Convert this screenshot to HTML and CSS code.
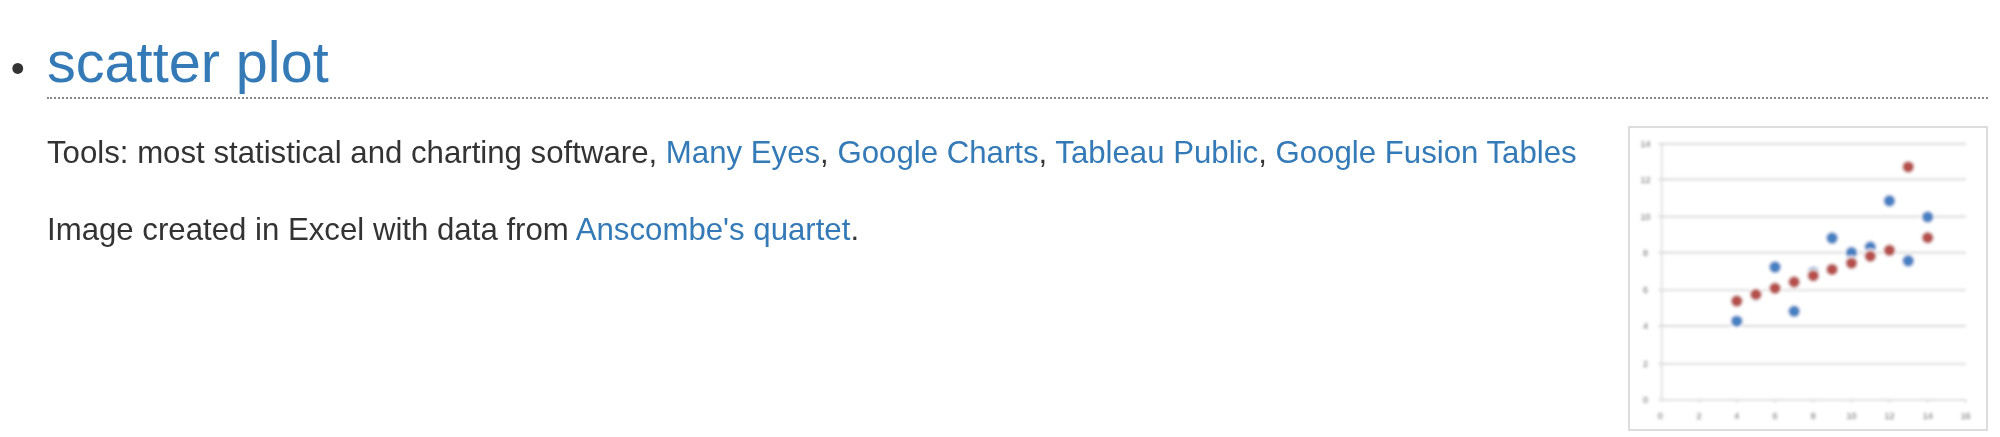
FILE: index.html
```html
<!DOCTYPE html>
<html lang="en">
<head>
<meta charset="utf-8">
<title>scatter plot</title>
<link rel="stylesheet" href="styles.css">
</head>
<body>
<ul class="charts">
  <li class="chart-item">
    <h2 class="chart-title"><a href="#">scatter plot</a></h2>
    <div class="chart-body">
      <div class="chart-text">
        <p>Tools: most statistical and charting software, <a href="#">Many Eyes</a>, <a href="#">Google Charts</a>, <a href="#">Tableau Public</a>, <a href="#">Google Fusion Tables</a></p>
        <p>Image created in Excel with data from <a href="#">Anscombe's quartet</a>.</p>
      </div>
      <svg class="thumb" viewBox="85 52 1078 913" role="img" aria-label="Scatter plot of Anscombe's quartet">
        <defs><filter id="soft" x="-5%" y="-5%" width="110%" height="110%"><feGaussianBlur stdDeviation="4.5"/></filter></defs>
        <g filter="url(#soft)">
          <g class="grid">
            <path d="M170 100H1103M170 208H1103M170 321H1103M170 430H1103M170 544H1103M170 652H1103M170 767H1103"/>
          </g>
          <path class="axis" d="M180 100V877M170 877H1103M295 877v8M408 877v8M524 877v8M640 877v8M756 877v8M871 877v8M987 877v8M1103 877v8"/>
          <g class="ylabels">
            <text x="131" y="110">14</text><text x="131" y="218">12</text><text x="131" y="331">10</text><text x="131" y="440">8</text><text x="131" y="554">6</text><text x="131" y="662">4</text><text x="131" y="777">2</text><text x="131" y="887">0</text>
          </g>
          <g class="xlabels">
            <text x="176" y="934">0</text><text x="293" y="934">2</text><text x="408" y="934">4</text><text x="524" y="934">6</text><text x="640" y="934">8</text><text x="756" y="934">10</text><text x="871" y="934">12</text><text x="987" y="934">14</text><text x="1102" y="934">16</text>
          </g>
          <g class="blue">
            <circle cx="408" cy="638" r="20"/><circle cx="466" cy="562" r="20"/><circle cx="524" cy="474" r="20"/><circle cx="582" cy="608" r="20"/><circle cx="640" cy="490" r="20"/><circle cx="697" cy="386" r="20"/><circle cx="756" cy="430" r="20"/><circle cx="813" cy="413" r="20"/><circle cx="871" cy="273" r="20"/><circle cx="928" cy="455" r="20"/><circle cx="987" cy="322" r="20"/>
          </g>
          <g class="red">
            <circle cx="408" cy="577" r="20"/><circle cx="466" cy="557" r="20"/><circle cx="524" cy="538" r="20"/><circle cx="582" cy="519" r="20"/><circle cx="640" cy="500" r="20"/><circle cx="697" cy="481" r="20"/><circle cx="756" cy="462" r="20"/><circle cx="813" cy="441" r="20"/><circle cx="871" cy="423" r="20"/><circle cx="928" cy="170" r="20"/><circle cx="987" cy="385" r="20"/>
          </g>
        </g>
      </svg>
    </div>
  </li>
</ul>
</body>
</html>
```
FILE: styles.css
```css
html, body {
  margin: 0;
  background: #fff;
}

body {
  font-family: "Liberation Sans", Arial, sans-serif;
  color: #333;
  height: 437px;
  overflow: hidden;
}

.charts {
  margin: 0;
  padding: 0 12px 0 47px;
  filter: blur(0.7px);
}

.chart-item {
  font-size: 30px;
}

.chart-item::marker {
  content: "\2022\00a0\00a0";
  font-size: 40px;
}

a {
  color: #337ab7;
  text-decoration: none;
}

.chart-title {
  margin: 0;
  padding-top: 29px;
  height: 68px;
  font-size: 57.6px;
  line-height: 66px;
  font-weight: 400;
  border-bottom: 2px dotted #888;
}

.chart-body {
  display: flex;
  justify-content: space-between;
  align-items: flex-start;
  padding-top: 27px;
}

.chart-text {
  font-size: 31.2px;
  line-height: 44px;
  padding-top: 5px;
}

.chart-text p {
  margin: 0 0 33px;
}

.thumb {
  display: block;
  width: 360px;
  height: 305px;
  flex: none;
  background: #fff;
  border: 2px solid #ddd;
  box-sizing: border-box;
}

.grid path {
  stroke: #d4d4d4;
  stroke-width: 5;
  fill: none;
}

.axis {
  stroke: #d4d4d4;
  stroke-width: 4;
  fill: none;
}

.thumb text {
  font-family: "Liberation Sans", Arial, sans-serif;
  font-size: 27px;
  fill: #666;
  text-anchor: middle;
}

.blue circle {
  fill: #4680c2;
  stroke: #fff;
  stroke-width: 5;
}

.red circle {
  fill: #b5504c;
  stroke: #fff;
  stroke-width: 5;
}
```
